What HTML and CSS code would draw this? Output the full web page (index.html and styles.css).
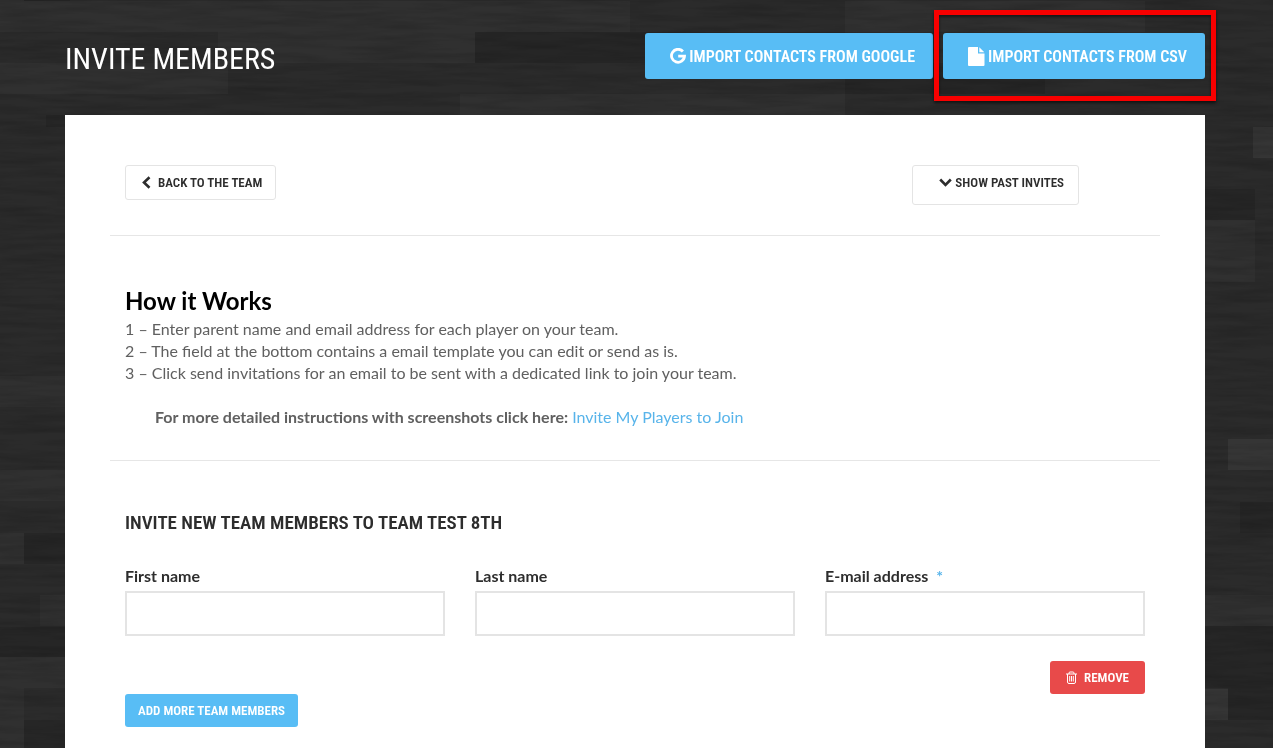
FILE: index.html
```html
<!DOCTYPE html>
<html lang="en">
<head>
<meta charset="utf-8">
<title>Invite Members</title>
<link rel="stylesheet" href="styles.css">
</head>
<body>
<svg class="wood" aria-hidden="true">
  <defs>
    <filter id="grain" x="0" y="0" width="100%" height="100%">
      <feTurbulence type="fractalNoise" baseFrequency="0.014 0.15" numOctaves="3" seed="7"/>
      <feColorMatrix values="0 0 0 0 0  0 0 0 0 0  0 0 0 0 0  1.6 0 0 0 -0.6"/>
    </filter>
    <pattern id="planks" width="1280" height="748" y="1" patternUnits="userSpaceOnUse">
      <rect width="1280" height="748" fill="#2b2b2b"/>
      <g fill="#303030">
        <path d="M0 0h630v31H0zM845 0h300v31H845zM218 31h257v31H218zM0 62h228v31H0zM460 93h385v31H460zM1205 219h50v62h-50zM0 375h70v31H0zM0 469h70v31H0zM0 532h24v31H0zM40 594h30v31H40zM0 687h24v61H0zM1205 594h75v31h-75zM0 656h70v31H0z"/>
      </g>
      <path fill="#353535" d="M1253 126h27v31h-27zM1205 688h23v31h-23zM1228 438h52v31h-52z"/>
      <g fill="#262626">
        <path d="M475 31h370v31H475zM845 62h200v31H845zM46 114h50v12H46zM1205 188h50v31h-50zM24 532h46v31H24zM0 626h70v30H0zM24 719h46v29H24zM1240 501h40v31h-40zM1205 625h75v62h-75zM1228 687h52v32h-52z"/>
      </g>
    </pattern>
  </defs>
  <rect width="100%" height="100%" fill="url(#planks)"/>
  <rect width="100%" height="100%" filter="url(#grain)" opacity="0.18"/>
</svg>

<div class="page">
  <header class="page-head">
    <h1 class="title">Invite Members</h1>
    <div class="imports">
      <button class="btn btn-import" type="button">
        <svg class="icon-google" viewBox="0 0 16 16" aria-hidden="true"><path d="M12.900 3.500A6.500 6.500 0 1 0 14.500 8.200H8.200" fill="none" stroke="currentColor" stroke-width="2.800"/></svg>
        Import contacts from Google
      </button>
      <div class="marked">
        <button class="btn btn-import" type="button">
          <svg class="icon-file" viewBox="0 0 17 19" aria-hidden="true"><path d="M1 0h9v6.500h6.500V18a1 1 0 0 1-1 1H1a1 1 0 0 1-1-1V1a1 1 0 0 1 1-1zM11.300 0.300l5 5h-5z" fill="currentColor"/></svg>
          Import contacts from CSV
        </button>
      </div>
    </div>
  </header>

  <main class="card">
    <div class="toolbar">
      <button class="btn btn-outline" type="button">
        <svg class="icon-left" viewBox="0 0 9 13" aria-hidden="true"><path d="M7.500 1.200L2 6.500l5.500 5.300" fill="none" stroke="currentColor" stroke-width="2.600"/></svg>
        Back to the team
      </button>
      <button class="btn btn-outline btn-past" type="button">
        <svg class="icon-down" viewBox="0 0 13 9" aria-hidden="true"><path d="M1.200 1.500l5.300 5.500 5.300-5.500" fill="none" stroke="currentColor" stroke-width="2.600"/></svg>
        Show past invites
      </button>
    </div>

    <section class="how">
      <h2 class="how-title">How it Works</h2>
      <p class="step">1 – Enter parent name and email address for each player on your team.</p>
      <p class="step">2 – The field at the bottom contains a email template you can edit or send as is.</p>
      <p class="step">3 – Click send invitations for an email to be sent with a dedicated link to join your team.</p>
      <p class="more"><strong>For more detailed instructions with screenshots click here:</strong> <a class="link" href="#">Invite My Players to Join</a></p>
    </section>

    <form class="invite">
      <h2 class="invite-title">Invite new team members to Team Test 8th</h2>
      <div class="fields">
        <div class="field">
          <label class="label" for="first">First name</label>
          <input class="input" id="first" type="text">
        </div>
        <div class="field">
          <label class="label" for="last">Last name</label>
          <input class="input" id="last" type="text">
        </div>
        <div class="field">
          <label class="label" for="email">E-mail address <span class="required">*</span></label>
          <input class="input" id="email" type="email" required>
        </div>
      </div>
      <div class="row-end">
        <button class="btn btn-small btn-remove" type="button">
          <svg class="icon-trash" viewBox="0 0 11 13" aria-hidden="true"><path d="M0 3h11M3 3V2q0-1 1-1h3q1 0 1 1v1M1.500 3v8q0 1.500 1.500 1.500h5q1.500 0 1.500-1.500V3M3.700 5v5.500M5.500 5v5.500M7.300 5v5.500" fill="none" stroke="currentColor"/></svg>
          Remove
        </button>
      </div>
      <button class="btn btn-small btn-add" type="button">Add more team members</button>
    </form>
  </main>
</div>
</body>
</html>
```
FILE: styles.css
```css
* {
  box-sizing: border-box;
}

body {
  margin: 0;
  background: #2a2a2a;
  color: #606060;
  font: 16px/22px Lato, sans-serif;
}

h1, h2, p {
  margin: 0;
}

.wood {
  position: fixed;
  z-index: -1;
  inset: 0;
  width: 100%;
  height: 100%;
}

.page {
  padding: 0 68px 0 65px;
}

.page-head {
  display: flex;
  justify-content: space-between;
  align-items: flex-start;
  padding: 33px 0 36px;
}

.title {
  color: #fff;
  font: 30px/46px "Roboto Condensed", "Liberation Sans Narrow", sans-serif;
  padding-top: 3px;
  margin-bottom: -3px;
  text-transform: uppercase;
}

.imports {
  display: flex;
  gap: 10px;
}

.marked {
  position: relative;
}

.marked::after {
  content: "";
  position: absolute;
  inset: -23px -11px -22px -9px;
  border: 5px solid #f80000;
  box-shadow: 0 2px 3px rgba(0, 0, 0, 0.6), inset 0 2px 3px rgba(0, 0, 0, 0.5);
  pointer-events: none;
}

.btn {
  display: inline-flex;
  align-items: center;
  border: 0;
  border-radius: 3px;
  font-family: "Roboto Condensed", "Liberation Sans Narrow", sans-serif;
  font-weight: 600;
  text-transform: uppercase;
  white-space: nowrap;
  cursor: pointer;
}

.btn-import {
  gap: 3px;
  height: 46px;
  padding: 0 18px 0 25px;
  background: #58bdf5;
  color: #fff;
  font-size: 16px;
}

.icon-google {
  width: 16px;
  height: 16px;
}

.icon-file {
  width: 17px;
  height: 19px;
}

.card {
  padding: 50px 45px 21px;
  background: #fff;
}

.toolbar {
  display: flex;
  justify-content: space-between;
  align-items: flex-start;
  padding: 0 81px 30px 15px;
  border-bottom: 1px solid #e6e6e6;
}

.btn-outline {
  gap: 7px;
  height: 35px;
  padding: 0 13px 0 16px;
  border: 1px solid #e4e4e4;
  background: #fff;
  color: #2d2d2d;
  font-size: 13px;
}

.btn-past {
  gap: 3px;
  height: 40px;
  padding: 0 14px 5px 26px;
}

.icon-left {
  width: 9px;
  height: 13px;
}

.icon-down {
  width: 13px;
  height: 9px;
}

.how {
  padding: 48px 15px 32px;
  border-bottom: 1px solid #e6e6e6;
}

.how-title {
  color: #000;
  font-size: 24px;
  font-weight: 700;
  line-height: 34px;
}

.more {
  padding: 22px 0 0 30px;
}

.link {
  color: #58b4ea;
  text-decoration: none;
}

.invite {
  padding: 44px 15px 0;
}

.invite-title {
  color: #2d2d2d;
  font: 600 19px/36px "Roboto Condensed", "Liberation Sans Narrow", sans-serif;
  text-transform: uppercase;
}

.fields {
  display: grid;
  grid-template-columns: repeat(3, 1fr);
  gap: 30px;
  padding-top: 24px;
}

.label {
  display: block;
  margin-bottom: 4px;
  color: #2d2d2d;
  font-weight: 700;
}

.required {
  margin-left: 4px;
  color: #58b4ea;
}

.input {
  display: block;
  width: 100%;
  height: 45px;
  padding: 0 12px;
  border: 2px solid #e4e4e4;
  border-radius: 0;
  background: #fff;
  font: inherit;
}

.row-end {
  display: flex;
  justify-content: flex-end;
  padding-top: 25px;
}

.btn-small {
  height: 33px;
  padding: 0 13px;
  color: #fff;
  font-size: 13px;
}

.btn-remove {
  gap: 7px;
  padding: 0 16px;
  background: #e84a4a;
}

.icon-trash {
  width: 11px;
  height: 13px;
}

.btn-add {
  display: flex;
  background: #58bdf5;
}
```
